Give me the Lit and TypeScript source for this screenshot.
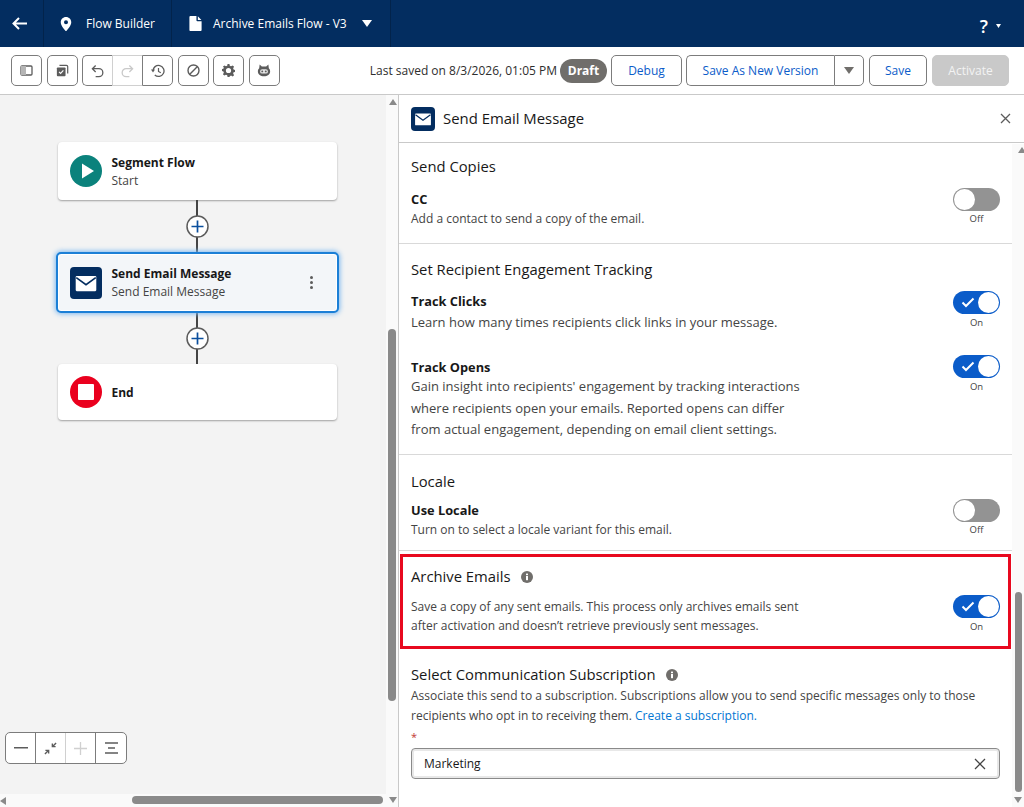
import { LitElement, html, css, svg } from 'lit';
import { customElement } from 'lit/decorators.js';

const mail = svg`<rect x="2.500" y="5.500" width="19" height="14" rx="1" fill="#fff"/><path d="M3 7l9 6.500L21 7" fill="none" stroke="#032d60" stroke-width="1.500"/>`;

@customElement('flow-toggle')
export class FlowToggle extends LitElement {
  static properties = { on: { type: Boolean } };
  on = false;

  static styles = css`
    :host {
      display: flex;
      flex-direction: column;
      align-items: center;
      width: 47px;
      flex: none;
      font-size: 9.5px;
      line-height: 12px;
      color: #444;
    }
    .track {
      position: relative;
      width: 47px;
      height: 23px;
      border-radius: 12px;
      background: #939393;
      margin-bottom: 3px;
    }
    .track.on { background: #0b5cc9; }
    .knob {
      position: absolute;
      top: 1px;
      left: 1px;
      width: 21px;
      height: 21px;
      border-radius: 50%;
      background: #fff;
    }
    .on .knob { left: 25px; }
    .off-label { margin-top: -1px; }
    svg { position: absolute; left: 8px; top: 6px; }
  `;

  render() {
    return html`
      <div class="track ${this.on ? 'on' : ''}">
        ${this.on ? html`<svg width="14" height="11" viewBox="0 0 14 11"><path d="M1.500 5.500l3.500 3.500 7.500-7.500" fill="none" stroke="#fff" stroke-width="2"/></svg>` : ''}
        <div class="knob"></div>
      </div>
      <span class="${this.on ? '' : 'off-label'}">${this.on ? 'On' : 'Off'}</span>
    `;
  }
}

@customElement('app-root')
export class AppRoot extends LitElement {
  static styles = css`
    :host {
      display: block;
      width: 1024px;
      height: 807px;
      overflow: hidden;
      position: relative;
      font-family: "Open Sans", "Noto Sans", sans-serif;
      font-size: 12px;
      color: #181818;
      background: #fff;
    }
    .topbar {
      display: flex;
      height: 47px;
      background: #032d60;
      color: #fff;
      font-size: 12px;
    }
    .topcell {
      display: flex;
      align-items: center;
      height: 47px;
      border-right: 1px solid #02234b;
      box-sizing: border-box;
    }
    .back { width: 44px; padding-left: 12px; }
    .app { width: 128px; padding-left: 16px; gap: 14px; }
    .doc { width: 219px; padding-left: 17px; gap: 11px; }
    .help {
      margin-left: auto;
      display: flex;
      align-items: center;
      gap: 8px;
      padding: 4px 23px 0 0;
      font-size: 18px;
      font-weight: 600;
    }
    .toolbar {
      display: flex;
      align-items: center;
      height: 48px;
      padding: 0 15px 0 11px;
      border-bottom: 1px solid #c9c9c9;
      box-sizing: border-box;
      background: #fff;
    }
    .tools { display: flex; gap: 4.500px; }
    .group { display: flex; }
    .tb {
      display: flex;
      align-items: center;
      justify-content: center;
      width: 31px;
      height: 31px;
      border: 1px solid #7c7c7c;
      border-radius: 5px;
      box-sizing: border-box;
      background: #fff;
    }
    .group .tb { border-radius: 0; border-right: 0; width: 30px; }
    .group .tb:first-child { border-radius: 5px 0 0 5px; }
    .group .tb:last-child { border-radius: 0 5px 5px 0; border-right: 1px solid #7c7c7c; width: 31px; }
    .group .tb.off { border-color: #d0d0d0; }
    .status {
      margin-left: auto;
      display: flex;
      align-items: center;
      color: #2e2e2e;
    }
    .draft {
      background: #706e6b;
      color: #fff;
      font-weight: 700;
      border-radius: 12px;
      height: 24px;
      width: 47px;
      margin-left: 3px;
      display: flex;
      align-items: center;
      justify-content: center;
    }
    .btn {
      display: flex;
      align-items: center;
      justify-content: center;
      height: 31px;
      border: 1px solid #7c7c7c;
      border-radius: 5px;
      box-sizing: border-box;
      color: #0b5cc9;
      background: #fff;
      margin-left: 5px;
    }
    .debug { width: 71px; margin-left: 4px; }
    .savenew { width: 148px; margin-left: 4px; border-right: 0; border-radius: 5px 0 0 5px; }
    .menu { width: 30px; margin-left: 0; border-radius: 0 5px 5px 0; }
    .save { width: 58px; }
    .activate { width: 77px; background: #c9c9c9; border-color: #c9c9c9; color: #f3f3f3; }

    .main { display: flex; height: 712px; }
    .canvas {
      position: relative;
      width: 399px;
      height: 712px;
      background: #f3f3f3;
      border-right: 1px solid #c9c9c9;
      box-sizing: border-box;
      overflow: hidden;
    }
    .flow {
      position: relative;
      width: 385px;
      display: flex;
      flex-direction: column;
      align-items: center;
      padding-top: 47px;
      padding-left: 9px;
      box-sizing: border-box;
    }
    .node {
      display: flex;
      align-items: center;
      width: 279px;
      height: 58px;
      background: #fff;
      border-radius: 4px;
      box-shadow: 0 1px 2px rgba(0, 0, 0, 0.35);
      padding-left: 12px;
      gap: 10px;
      box-sizing: border-box;
      flex: none;
    }
    .node.sel {
      width: 283px;
      height: 61px;
      background: #f3f6f9;
      border: 2px solid #1b7fd6;
      border-radius: 5px;
      box-shadow: inset 0 0 0 1px #fff, 0 0 5px 1px #7db9f0;
      padding-left: 12px;
      position: relative;
      z-index: 1;
    }
    .node.end { height: 56px; }
    .node .tx { padding-top: 1px; }
    .node.sel .tx { padding-top: 0; }
    .node b { display: block; font-size: 12px; font-weight: 700; line-height: 18px; }
    .node span { display: block; line-height: 18px; color: #444; }
    .ic {
      width: 32px;
      height: 32px;
      flex: none;
      display: flex;
      align-items: center;
      justify-content: center;
    }
    .ic.mail { background: #032d60; border-radius: 4px; }
    .kebab { margin-left: auto; margin-right: 24px; display: flex; flex-direction: column; gap: 2px; }
    .kebab i { width: 3px; height: 3px; border-radius: 50%; background: #5c5c5c; display: block; }
    .link {
      position: relative;
      width: 2px;
      background: #444;
      flex: none;
      display: flex;
      align-items: center;
      justify-content: center;
    }
    .plus { position: absolute; flex: none; width: 23px; height: 23px; }
    .zoom {
      position: absolute;
      left: 5px;
      top: 637px;
      display: flex;
      border: 1px solid #7c7c7c;
      border-radius: 5px;
      background: #fff;
      height: 32px;
      box-sizing: border-box;
    }
    .zoom div {
      width: 30px;
      display: flex;
      align-items: center;
      justify-content: center;
      border-right: 1px solid #7c7c7c;
      box-sizing: border-box;
    }
    .zoom div:nth-child(2) { border-right-color: #d0d0d0; }
    .zoom div:last-child { border-right: 0; }
    .gutter-h {
      position: absolute;
      left: 0;
      top: 699px;
      width: 398px;
      height: 13px;
      background: #fafafa;
    }
    .gutter-v {
      position: absolute;
      left: 386px;
      top: 0;
      width: 12px;
      height: 712px;
      background: #fafafa;
    }
    .sb-h {
      position: absolute;
      left: 132px;
      top: 701px;
      width: 251px;
      height: 8px;
      border-radius: 4px;
      background: #8a8a8a;
    }
    .sb-v {
      position: absolute;
      left: 388px;
      top: 234px;
      width: 8px;
      height: 372px;
      border-radius: 4px;
      background: #8a8a8a;
    }
    .arr {
      position: absolute;
      width: 0;
      height: 0;
      border-style: solid;
      border-color: transparent;
    }
    .up { border-width: 0 4px 6px; border-bottom-color: #8a8a8a; }
    .dn { border-width: 6px 4px 0; border-top-color: #8a8a8a; }
    .lf { border-width: 4px 6px 4px 0; border-right-color: #8a8a8a; }

    .panel { position: relative; flex: 1; min-width: 0; }
    .phead {
      display: flex;
      align-items: center;
      gap: 8px;
      height: 48px;
      padding: 0 13px 0 12px;
      border-bottom: 1px solid #c9c9c9;
      box-sizing: border-box;
      font-size: 14.900px;
    }
    .phead span { padding-bottom: 2px; }
    .phead .ic { width: 24px; height: 24px; }
    .phead svg.x { margin-left: auto; }
    .body { width: 613px; }
    .sec { padding: 0 12px; border-bottom: 1px solid #d9d9d9; box-sizing: border-box; }
    h3 { margin: 0; padding-bottom: 2px; font-size: 14.800px; font-weight: 400; line-height: 20px; }
    .row { display: flex; justify-content: space-between; }
    .row b { display: block; font-size: 12.800px; font-weight: 700; line-height: 18px; }
    .row p, .plain { margin: 0; color: #444; line-height: 21px; }
    .txt { width: 400px; }
    .s1 { height: 101px; padding-top: 13px; }
    .s1 .row { margin-top: 10px; }
    .s1 .txt { padding-top: 2px; }
    .s2 { height: 211px; padding-top: 15px; }
    .s2 .row { margin-top: 10px; }
    .s2 .txt { padding-top: 1px; font-size: 13px; }
    .s2 .txt p { margin-top: 2px; }
    .s2 .row + .row { margin-top: 22px; }
    .s2 .row + .row .txt { padding-top: 3px; }
    .s2 .row + .row p { margin-top: 0; line-height: 21.500px; }
    .s3 { height: 96px; padding-top: 16px; }
    .s3 .row { margin-top: 6px; }
    .s3 .txt { padding-top: 2px; }
    .arch {
      margin: 3px 0 0 1px;
      width: 611px;
      height: 95px;
      border: 3px solid #e8091f;
      box-sizing: border-box;
      padding: 9px 8px 0 8px;
    }
    .arch .row { margin-top: 7px; }
    .arch .plain { width: 400px; line-height: 19px; margin-top: 2px; }
    .ttl { display: flex; align-items: center; gap: 10px; }
    .inf { width: 12px; height: 12px; flex: none; }
    .sub { padding: 15px 12px 0; }
    .sub .plain { line-height: 20px; }
    .sub a { color: #0176d3; }
    .req { color: #c23934; line-height: 14px; height: 14px; margin-top: 4px; font-size: 11px; }
    .inp {
      display: flex;
      align-items: center;
      justify-content: space-between;
      height: 31px;
      margin-top: 4px;
      width: 589px;
      border: 1px solid #8a8a8a;
      border-radius: 4px;
      box-shadow: inset 0 0 0 2px #e8e8e8;
      padding: 0 13px 0 12px;
      box-sizing: border-box;
    }
    .psb {
      position: absolute;
      left: 616px;
      top: 497px;
      width: 7px;
      height: 200px;
      border-radius: 4px;
      background: #8a8a8a;
    }
    .pgutter {
      position: absolute;
      right: 0;
      top: 49px;
      bottom: 0;
      width: 12px;
      background: #fafafa;
    }
  `;

  private info() {
    return html`<svg class="inf" viewBox="0 0 12 12"><circle cx="6" cy="6" r="6" fill="#706e6b"/><rect x="5" y="5" width="2" height="4.200" fill="#fff"/><rect x="5" y="2.600" width="2" height="1.600" fill="#fff"/></svg>`;
  }

  private plus() {
    return html`<svg class="plus" viewBox="0 0 23 23"><circle cx="11.500" cy="11.500" r="10.500" fill="#fff" stroke="#5c5c5c" stroke-width="1.500"/><path d="M11.500 5.500v12M5.500 11.500h12" stroke="#0b4f9e" stroke-width="1.700"/></svg>`;
  }

  render() {
    return html`
      <div class="topbar">
        <div class="topcell back">
          <svg width="15" height="13" viewBox="0 0 15 13"><path d="M15 6.500H1.500M7 1L1.500 6.500 7 12" fill="none" stroke="#fff" stroke-width="2"/></svg>
        </div>
        <div class="topcell app">
          <svg width="12" height="14" viewBox="0 0 13 16"><path fill-rule="evenodd" d="M6.500 0C3 0 .5 2.700.5 6c0 3.800 4 8 5.300 9.600.4.500 1 .500 1.400 0C8.500 14 12.500 9.800 12.500 6c0-3.300-2.500-6-6-6zm0 8.300a2.300 2.300 0 1 1 0-4.600 2.300 2.300 0 0 1 0 4.600z" fill="#fff"/></svg>
          <span>Flow Builder</span>
        </div>
        <div class="topcell doc">
          <svg width="13" height="15" viewBox="0 0 13 16"><path d="M1 0h6.500v4.500c0 .6.400 1 1 1H13v9.300c0 .7-.5 1.200-1.200 1.200H1.200C.5 16 0 15.500 0 14.800V1C0 .4.400 0 1 0zM9 .3l3.800 3.900H9z" fill="#fff"/></svg>
          <span>Archive Emails Flow - V3</span>
          <svg style="margin-left:4px" width="10" height="7" viewBox="0 0 10 7"><path d="M0 0h10L5 7z" fill="#fff"/></svg>
        </div>
        <div class="help">
          <span>?</span>
          <svg width="5" height="4" viewBox="0 0 5 4"><path d="M0 0h5L2.500 4z" fill="#fff"/></svg>
        </div>
      </div>

      <div class="toolbar">
        <div class="tools">
          <div class="tb"><svg width="13" height="11" viewBox="0 0 13 11"><rect x="1" y="1" width="11" height="9" rx="1" fill="#fff" stroke="#5c5c5c" stroke-width="1.300"/><rect x="1" y="1" width="5" height="9" fill="#b5b5b5"/></svg></div>
          <div class="tb"><svg width="13" height="13" viewBox="0 0 15 15"><path d="M4 1.500h8c1 0 1.500.5 1.500 1.500v8" fill="none" stroke="#5c5c5c" stroke-width="1.400"/><rect x="1" y="4" width="10" height="10" rx="1" fill="#5c5c5c"/><path d="M3.500 9l1.800 1.800 3.200-3.500" fill="none" stroke="#fff" stroke-width="1.300"/></svg></div>
          <div class="group">
            <div class="tb"><svg width="13" height="14" viewBox="0 0 14 14"><path d="M5 1L1.500 4.500 5 8M2 4.500h6.500a4 4 0 0 1 0 8.500H5" fill="none" stroke="#5c5c5c" stroke-width="1.400"/></svg></div>
            <div class="tb off"><svg width="13" height="14" viewBox="0 0 14 14"><path d="M9 1l3.500 3.500L9 8M12 4.500H5.500a4 4 0 0 0 0 8.500H9" fill="none" stroke="#c9c9c9" stroke-width="1.400"/></svg></div>
            <div class="tb"><svg width="14" height="14" viewBox="0 0 14 14"><path d="M2 7a5.500 5.500 0 1 1 1.800 4" fill="none" stroke="#5c5c5c" stroke-width="1.300"/><path d="M0 5.500h4L2 8.500z" fill="#5c5c5c"/><path d="M7.500 4v3.500l2.300 1.300" fill="none" stroke="#5c5c5c" stroke-width="1.200"/></svg></div>
          </div>
          <div class="tb"><svg width="13" height="13" viewBox="0 0 13 13"><circle cx="6.500" cy="6.500" r="5.500" fill="none" stroke="#5c5c5c" stroke-width="1.400"/><path d="M2.800 10.200l7.400-7.400" stroke="#5c5c5c" stroke-width="1.400"/></svg></div>
          <div class="tb"><svg width="13" height="13" viewBox="0 0 14 14"><path fill-rule="evenodd" d="M6 0h2l.4 1.900 1.300.6 1.800-1L13 3 12 4.700l.5 1.300 1.500.5v2l-1.500.5-.5 1.300 1 1.700-1.500 1.500-1.800-1-1.300.6L8 14H6l-.4-1.900-1.300-.6-1.800 1L1 11l1-1.700-.5-1.300L0 7.500v-2L1.500 5 2 3.700 1 3l1.500-1.500 1.800 1 1.300-.6zM7 4.200a2.800 2.800 0 1 0 0 5.600 2.800 2.800 0 0 0 0-5.600z" fill="#5c5c5c"/></svg></div>
          <div class="tb"><svg width="14" height="13" viewBox="0 0 16 14"><path d="M3 0l2.500 2.500h5L13 0l.5 4.500c1 1 1.500 2 1.500 3.500 0 3.500-3 5.500-7 5.500S1 11.500 1 8c0-1.500.5-2.500 1.500-3.500z" fill="#5c5c5c"/><rect x="3.500" y="5.500" width="9" height="5" rx="2.500" fill="#e8e8e8"/><circle cx="6" cy="8" r="1.100" fill="#5c5c5c"/><circle cx="10" cy="8" r="1.100" fill="#5c5c5c"/></svg></div>
        </div>
        <div class="status">
          <span>Last saved on 8/3/2026, 01:05 PM</span>
          <span class="draft">Draft</span>
          <div class="btn debug">Debug</div>
          <div class="btn savenew">Save As New Version</div>
          <div class="btn menu"><svg width="10" height="7" viewBox="0 0 10 7"><path d="M0 0h10L5 7z" fill="#706e6b"/></svg></div>
          <div class="btn save">Save</div>
          <div class="btn activate">Activate</div>
        </div>
      </div>

      <div class="main">
        <div class="canvas">
          <div class="gutter-v"></div>
          <div class="gutter-h"></div>
          <div class="flow">
            <div class="node">
              <div class="ic"><svg width="32" height="32" viewBox="0 0 32 32"><circle cx="16" cy="16" r="16" fill="#0b827c"/><path d="M12 8.500L24 16l-12 7.500z" fill="#fff"/></svg></div>
              <div class="tx"><b>Segment Flow</b><span>Start</span></div>
            </div>
            <div class="link" style="height:52px">${this.plus()}</div>
            <div class="node sel">
              <div class="ic mail"><svg width="26" height="26" viewBox="0 0 24 24">${mail}</svg></div>
              <div class="tx"><b>Send Email Message</b><span>Send Email Message</span></div>
              <div class="kebab"><i></i><i></i><i></i></div>
            </div>
            <div class="link" style="height:51px">${this.plus()}</div>
            <div class="node end">
              <div class="ic"><svg width="32" height="32" viewBox="0 0 32 32"><circle cx="16" cy="16" r="16" fill="#ea001e"/><rect x="8" y="8" width="16" height="16" rx="1" fill="#fff"/></svg></div>
              <div class="tx"><b>End</b></div>
            </div>
          </div>

          <div class="zoom">
            <div><svg width="14" height="2" viewBox="0 0 14 2"><rect width="14" height="1.500" fill="#5c5c5c"/></svg></div>
            <div><svg width="13" height="13" viewBox="0 0 14 14"><path d="M13 1L9 5M9 1.500V5h3.500M1 13l4-4M5 12.500V9H1.500" fill="none" stroke="#5c5c5c" stroke-width="1.500"/></svg></div>
            <div><svg width="13" height="13" viewBox="0 0 13 13"><path d="M6.500 0v13M0 6.500h13" stroke="#d0d0d0" stroke-width="1.300"/></svg></div>
            <div><svg width="13" height="12" viewBox="0 0 13 12"><path d="M0 1h13M3 6h7M0 11h13" stroke="#5c5c5c" stroke-width="1.400"/></svg></div>
          </div>

          <div class="sb-h"></div>
          <div class="sb-v"></div>
          <div class="arr up" style="left:389px;top:4px"></div>
          <div class="arr dn" style="left:389px;top:702px"></div>
          <div class="arr lf" style="left:0;top:702px"></div>
        </div>

        <div class="panel">
          <div class="phead">
            <div class="ic mail"><svg width="20" height="20" viewBox="0 0 24 24">${mail}</svg></div>
            <span>Send Email Message</span>
            <svg class="x" width="11" height="11" viewBox="0 0 11 11"><path d="M1 1l9 9M10 1l-9 9" stroke="#5c5c5c" stroke-width="1.300"/></svg>
          </div>
          <div class="pgutter"></div>
          <div class="body">
            <div class="sec s1">
              <h3>Send Copies</h3>
              <div class="row">
                <div class="txt"><b>CC</b><p>Add a contact to send a copy of the email.</p></div>
                <flow-toggle></flow-toggle>
              </div>
            </div>
            <div class="sec s2">
              <h3>Set Recipient Engagement Tracking</h3>
              <div class="row">
                <div class="txt"><b>Track Clicks</b><p>Learn how many times recipients click links in your message.</p></div>
                <flow-toggle on></flow-toggle>
              </div>
              <div class="row">
                <div class="txt"><b>Track Opens</b><p>Gain insight into recipients' engagement by tracking interactions where recipients open your emails. Reported opens can differ from actual engagement, depending on email client settings.</p></div>
                <flow-toggle on></flow-toggle>
              </div>
            </div>
            <div class="sec s3">
              <h3>Locale</h3>
              <div class="row">
                <div class="txt"><b>Use Locale</b><p>Turn on to select a locale variant for this email.</p></div>
                <flow-toggle></flow-toggle>
              </div>
            </div>
            <div class="arch">
              <div class="ttl"><h3>Archive Emails</h3>${this.info()}</div>
              <div class="row">
                <p class="plain">Save a copy of any sent emails. This process only archives emails sent after activation and doesn’t retrieve previously sent messages.</p>
                <flow-toggle on></flow-toggle>
              </div>
            </div>
            <div class="sub">
              <div class="ttl"><h3>Select Communication Subscription</h3>${this.info()}</div>
              <p class="plain">Associate this send to a subscription. Subscriptions allow you to send specific messages only to those recipients who opt in to receiving them. <a>Create a subscription.</a></p>
              <div class="req">*</div>
              <div class="inp">
                <span>Marketing</span>
                <svg width="12" height="12" viewBox="0 0 12 12"><path d="M1 1l10 10M11 1L1 11" stroke="#444" stroke-width="1.300"/></svg>
              </div>
            </div>
          </div>
          <div class="psb"></div>
          <div class="arr up" style="left:619px;top:52px"></div>
          <div class="arr dn" style="left:615px;top:702px"></div>
        </div>
      </div>
    `;
  }
}
